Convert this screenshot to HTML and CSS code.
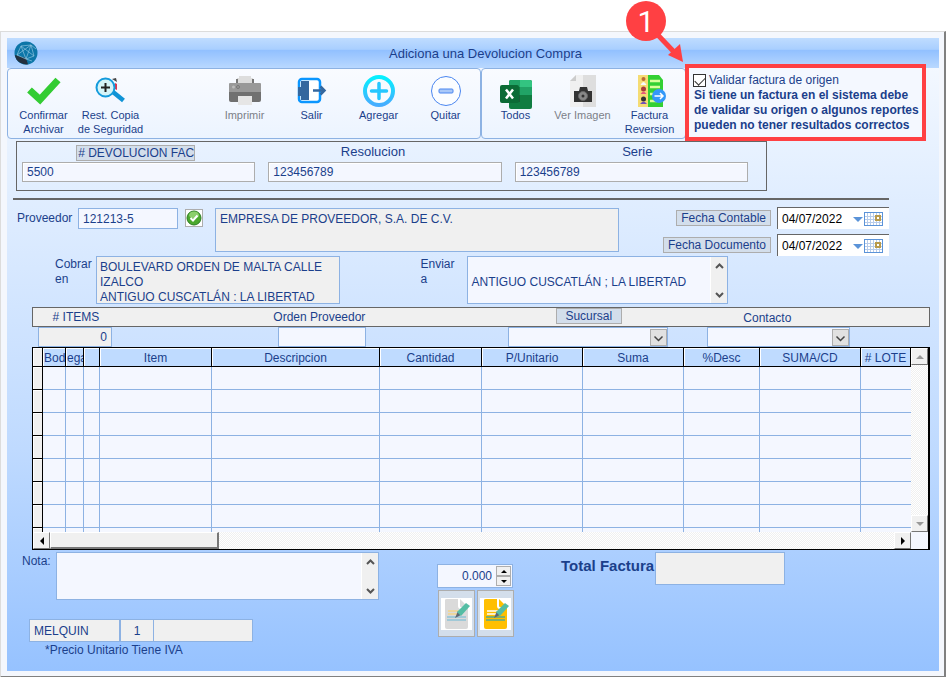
FILE: index.html
```html
<!DOCTYPE html>
<html lang="es">
<head>
<meta charset="UTF-8" />
<meta name="viewport" content="width=device-width, initial-scale=1" />
<title>Adiciona una Devolucion Compra</title>
<link rel="stylesheet" href="styles.css">
</head>
<body>

<div class="window">
  <header class="titlebar">
    <svg class="logo" viewBox="0 0 24 24">
      <circle cx="12" cy="12" r="11.5" fill="#0d76a8"/>
      <path d="M0.8 14 L12 17 L14 23.3 A11.5 11.5 0 0 1 0.8 14Z" fill="#22303f"/>
      <path d="M7 5 L17 4 L20 15 L12 18 L3 14Z M7 5 L20 15 M17 4 L3 14 M7 5 L12 18 M17 4 L12 18 M17 4 L22 8 M12 18 L18 20" fill="none" stroke="#8cc3de" stroke-width=".7"/>
    </svg>
    <h1>Adiciona una Devolucion Compra</h1>
  </header>

  <div class="toolbar">
    <div class="group group-main">
      <button class="tool">
        <svg viewBox="0 0 32 32"><path d="M1.500 15 L12 24.500 L30 5" fill="none" stroke="#33cc33" stroke-width="7"/></svg>
        <span>Confirmar Archivar</span>
      </button>
      <button class="tool">
        <svg viewBox="0 0 32 32">
          <path d="M17 4 l4 -1 l1 4z" fill="#444"/><path d="M20 8 l2 1 v6 l-2 -1z" fill="#e0344c"/>
          <path d="M18 17 L28.500 25.500" stroke="#0f93d6" stroke-width="4.500"/>
          <circle cx="10.500" cy="12.500" r="9" fill="#d5f4f8" stroke="#149bdc" stroke-width="2"/>
          <path d="M10.500 8 V17 M6 12.500 H15" stroke="#222" stroke-width="2"/>
        </svg>
        <span>Rest. Copia de Seguridad</span>
      </button>
      <button class="tool tool-off tool-apart" disabled>
        <svg viewBox="0 0 32 32">
          <path d="M8 9 V3 H10 V1 H22 V3 H24 V9Z" fill="#ddd"/>
          <path d="M7 4 H9 V8 H23 V4 H25 V10 H7Z" fill="#777"/>
          <rect y="8" width="32" height="10" rx="1" fill="#999"/>
          <path d="M0 17 H32 V25 Q32 27 30 27 H2 Q0 27 0 25Z" fill="#707070"/>
          <rect x="9" y="21" width="14" height="9" fill="#e6e6e6"/>
          <circle cx="4.500" cy="12" r="1.500" fill="#bbb"/><circle cx="9" cy="12" r="1.500" fill="#999" stroke="#777"/>
        </svg>
        <span>Imprimir</span>
      </button>
      <button class="tool">
        <svg viewBox="0 0 32 32">
          <rect x="3" y="4" width="21" height="23" rx="3" fill="#fff" stroke="#0a96ff" stroke-width="2.500"/>
          <path d="M5 6 H13 V25 H5 V21 H2 V12 H5Z" fill="#34679e"/>
          <path d="M17 15.500 H28 M24.500 11.500 L28.500 15.500 L24.500 19.500" fill="none" stroke="#34679e" stroke-width="2.500"/>
        </svg>
        <span>Salir</span>
      </button>
      <button class="tool">
        <svg viewBox="0 0 32 32">
          <defs><linearGradient id="ring" x2="0" y2="1"><stop stop-color="#06f0ff"/><stop offset="1" stop-color="#46acff"/></linearGradient></defs>
          <circle cx="16" cy="16" r="14" fill="#f8fbff" stroke="url(#ring)" stroke-width="4"/>
          <path d="M16 8.500 V23.500 M8.500 16 H23.500" stroke="#25c7ff" stroke-width="3.500" stroke-linecap="round"/>
        </svg>
        <span>Agregar</span>
      </button>
      <button class="tool">
        <svg viewBox="0 0 32 32">
          <circle cx="16" cy="16" r="14.500" fill="#fbfdff" stroke="#4a86f0"/>
          <rect x="9" y="14" width="14" height="4" rx="1" fill="#a9c8f8" stroke="#4a86f0"/>
        </svg>
        <span>Quitar</span>
      </button>
    </div>

    <div class="group group-extra">
      <button class="tool">
        <svg viewBox="0 0 32 32">
          <rect x="9" y="5" width="23" height="29" rx="2" fill="#107c41"/>
          <path d="M9 7 Q9 5 11 5 H20 V12 H9Z" fill="#21a366"/><path d="M20 5 H30 Q32 5 32 7 V12 H20Z" fill="#33c481"/>
          <path d="M20 12 H32 V20 H20Z" fill="#21a366"/><path d="M9 20 H20 V27 H9Z" fill="#185c37"/>
          <rect y="10" width="19" height="18" rx="2" fill="#0b6b36"/>
          <path d="M6 14.500 L13 23.500 M13 14.500 L6 23.500" stroke="#fff" stroke-width="2.500"/>
        </svg>
        <span>Todos</span>
      </button>
      <button class="tool tool-off" disabled>
        <svg viewBox="0 0 32 32">
          <path d="M9 0 H16 V32 H3 V6Z" fill="#f0f0f0"/><path d="M16 0 H29 V32 H16Z" fill="#dedede"/><path d="M9 0 V6 H3Z" fill="#ccc"/>
          <path d="M7 16 H12 L13 12 H20 L21 16 H25 V27 H7Z" fill="#333"/>
          <circle cx="16" cy="21" r="4.500" fill="#888" stroke="#666"/><circle cx="16" cy="21" r="1.500" fill="#333"/>
        </svg>
        <span>Ver Imagen</span>
      </button>
      <button class="tool">
        <svg viewBox="0 0 32 32">
          <path d="M4 0 H25 L29 5 V32 H4Z" fill="#33d033"/><rect x="4" width="10" height="32" fill="#f5dc74"/>
          <path d="M16 6 H26 M16 12 H26 M16 19 H22 M16 26 H23" stroke="#d9ff9a" stroke-width="2.500"/>
          <circle cx="9.500" cy="4" r="2" fill="#b96a35"/><path d="M6.500 10 Q9.500 4 12.500 10Z" fill="#f8fafc"/>
          <circle cx="9.500" cy="14" r="2.500" fill="#a63c3c"/><path d="M6.500 19 Q9.500 14 12.500 19Z" fill="#e65b7a"/>
          <circle cx="9.500" cy="24" r="2.500" fill="#333"/><path d="M6 29 Q9.500 24 13 29Z" fill="#7350b8"/>
          <circle cx="25" cy="21" r="7" fill="#3498f8"/>
          <path d="M20.500 21 H29 M26 18 L29 21 L26 24" fill="none" stroke="#fff" stroke-width="1.500"/>
        </svg>
        <span>Factura Reversion</span>
      </button>
    </div>

    <div class="validate">
      <label class="check"><input type="checkbox" checked> Validar factura de origen</label>
      <p>Si tiene un factura en el sistema debe<br>de validar su origen o algunos reportes<br>pueden no tener resultados correctos</p>
      <svg class="callout" viewBox="0 0 60 64">
        <circle cx="20" cy="21" r="20" fill="#ff4043"/>
        <path d="M30 33 L49 53" stroke="#ff4043" stroke-width="5"/>
        <path d="M57 62 L42 55 L54 44Z" fill="#ff4043"/>
        <text x="20" y="32" text-anchor="middle">1</text>
      </svg>
    </div>
  </div>

  <section class="document">
    <div class="field">
      <button class="link-btn link-clip"># DEVOLUCION FACT</button>
      <input class="box" type="text" value="5500" aria-label="Devolucion factura">
    </div>
    <div class="field">
      <label class="res-label" for="resolucion">Resolucion</label>
      <input class="box" id="resolucion" type="text" value="123456789">
    </div>
    <div class="field">
      <label class="serie-label" for="serie">Serie</label>
      <input class="box" id="serie" type="text" value="123456789">
    </div>
  </section>

  <hr>

  <section class="supplier">
    <label for="proveedor">Proveedor</label>
    <input class="code" id="proveedor" type="text" value="121213-5">
    <button class="accept" aria-label="Aceptar">
      <svg viewBox="0 0 16 16"><circle cx="8" cy="8" r="7" fill="#4ba82e" stroke="#2b7d22"/><ellipse cx="8" cy="5" rx="5" ry="3.500" fill="#8ccf6c"/><path d="M4.500 8 L7 10.500 L11.500 5.500" fill="none" stroke="#fff" stroke-width="2"/></svg>
    </button>
    <textarea class="company" readonly aria-label="Empresa">EMPRESA DE PROVEEDOR, S.A. DE C.V.</textarea>
    <div class="dates">
      <div class="date-row">
        <button class="link-btn">Fecha Contable</button>
        <div class="date">
          <input type="text" value="04/07/2022" aria-label="Fecha Contable">
          <button aria-label="Calendario"><svg viewBox="0 0 30 14"><path d="M0 5 H10 L5 10Z" fill="#5b93d8"/><rect x="11.500" y=".5" width="18" height="13" fill="#fff" stroke="#5b93d8"/><path d="M14.500 1 V13 M17.500 1 V13 M20.500 1 V13 M23.500 1 V13 M26.500 1 V13 M12 4.500 H29 M12 7.500 H29 M12 10.500 H29" stroke="#b8ccea"/><rect x="23" y="4" width="4" height="4" fill="#fff" stroke="#b89a4c" stroke-width="2"/></svg></button>
        </div>
      </div>
      <div class="date-row">
        <button class="link-btn">Fecha Documento</button>
        <div class="date">
          <input type="text" value="04/07/2022" aria-label="Fecha Documento">
          <button aria-label="Calendario"><svg viewBox="0 0 30 14"><path d="M0 5 H10 L5 10Z" fill="#5b93d8"/><rect x="11.500" y=".5" width="18" height="13" fill="#fff" stroke="#5b93d8"/><path d="M14.500 1 V13 M17.500 1 V13 M20.500 1 V13 M23.500 1 V13 M26.500 1 V13 M12 4.500 H29 M12 7.500 H29 M12 10.500 H29" stroke="#b8ccea"/><rect x="23" y="4" width="4" height="4" fill="#fff" stroke="#b89a4c" stroke-width="2"/></svg></button>
        </div>
      </div>
    </div>
  </section>

  <section class="addresses">
    <label for="cobrar">Cobrar en</label>
    <textarea class="bill-to" id="cobrar" readonly>BOULEVARD ORDEN DE MALTA CALLE
IZALCO
ANTIGUO CUSCATLÁN : LA LIBERTAD</textarea>
    <label class="ship-label" for="enviar">Enviar a</label>
    <div class="memo">
      <textarea id="enviar">

ANTIGUO CUSCATLÁN ; LA LIBERTAD</textarea>
      <div class="memo-scroll">
        <svg viewBox="0 0 9 6"><path d="M1 5 L4.500 1.500 L8 5" fill="none" stroke="#555" stroke-width="2"/></svg>
        <svg viewBox="0 0 9 6"><path d="M1 1 L4.500 4.500 L8 1" fill="none" stroke="#555" stroke-width="2"/></svg>
      </div>
    </div>
  </section>

  <section class="items">
    <div class="items-labels">
      <label for="nitems"># ITEMS</label>
      <label for="orden">Orden Proveedor</label>
      <button class="link-btn sucursal">Sucursal</button>
      <label class="contacto" for="contacto">Contacto</label>
    </div>
    <div class="items-fields">
      <input class="count" id="nitems" type="text" value="0" readonly>
      <input class="order" id="orden" type="text">
      <div class="combo combo-suc">
        <select aria-label="Sucursal"><option></option></select>
        <svg viewBox="0 0 17 17"><rect x=".5" y=".5" width="16" height="16" fill="#e1e1e1" stroke="#adadad"/><path d="M4.500 7.500 L8.500 11.500 L12.500 7.500" fill="none" stroke="#444" stroke-width="1.500"/></svg>
      </div>
      <div class="combo combo-con">
        <select id="contacto"><option></option></select>
        <svg viewBox="0 0 17 17"><rect x=".5" y=".5" width="16" height="16" fill="#e1e1e1" stroke="#adadad"/><path d="M4.500 7.500 L8.500 11.500 L12.500 7.500" fill="none" stroke="#444" stroke-width="1.500"/></svg>
      </div>
    </div>

    <div class="grid">
      <div class="grid-body">
        <table>
          <colgroup>
            <col class="c-mark"><col class="c-bod"><col class="c-ega"><col class="c-sel"><col class="c-item"><col class="c-desc">
            <col class="c-cant"><col class="c-num"><col class="c-num"><col class="c-pct"><col class="c-cd"><col class="c-lote">
          </colgroup>
          <thead>
            <tr><th class="mark"></th><th class="left">Bod</th><th class="left">ega</th><th></th><th>Item</th><th>Descripcion</th><th>Cantidad</th><th>P/Unitario</th><th>Suma</th><th>%Desc</th><th>SUMA/CD</th><th># LOTE</th></tr>
          </thead>
          <tbody>
            <tr><td class="mark"></td><td></td><td></td><td></td><td></td><td></td><td></td><td></td><td></td><td></td><td></td><td></td></tr>
            <tr><td class="mark"></td><td></td><td></td><td></td><td></td><td></td><td></td><td></td><td></td><td></td><td></td><td></td></tr>
            <tr><td class="mark"></td><td></td><td></td><td></td><td></td><td></td><td></td><td></td><td></td><td></td><td></td><td></td></tr>
            <tr><td class="mark"></td><td></td><td></td><td></td><td></td><td></td><td></td><td></td><td></td><td></td><td></td><td></td></tr>
            <tr><td class="mark"></td><td></td><td></td><td></td><td></td><td></td><td></td><td></td><td></td><td></td><td></td><td></td></tr>
            <tr><td class="mark"></td><td></td><td></td><td></td><td></td><td></td><td></td><td></td><td></td><td></td><td></td><td></td></tr>
            <tr><td class="mark"></td><td></td><td></td><td></td><td></td><td></td><td></td><td></td><td></td><td></td><td></td><td></td></tr>
            <tr class="cut"><td class="mark"></td><td></td><td></td><td></td><td></td><td></td><td></td><td></td><td></td><td></td><td></td><td></td></tr>
          </tbody>
        </table>
        <div class="hscroll">
          <button aria-label="Izquierda"><svg viewBox="0 0 8 8"><path d="M6 0 V8 L2 4Z"/></svg></button>
          <div class="thumb"></div>
          <button class="end" aria-label="Derecha"><svg viewBox="0 0 8 8"><path d="M2 0 V8 L6 4Z"/></svg></button>
        </div>
      </div>
      <div class="vscroll">
        <button aria-label="Subir" disabled><svg viewBox="0 0 8 8"><path d="M0 6 H8 L4 2Z"/></svg></button>
        <button class="end" aria-label="Bajar" disabled><svg viewBox="0 0 8 8"><path d="M0 2 H8 L4 6Z"/></svg></button>
      </div>
    </div>
  </section>

  <footer class="bottom">
    <div class="notes">
      <div class="note-row">
        <label for="nota">Nota:</label>
        <div class="memo note-memo">
          <textarea id="nota"></textarea>
          <div class="memo-scroll">
            <svg viewBox="0 0 9 6"><path d="M1 5 L4.500 1.500 L8 5" fill="none" stroke="#555" stroke-width="2"/></svg>
            <svg viewBox="0 0 9 6"><path d="M1 1 L4.500 4.500 L8 1" fill="none" stroke="#555" stroke-width="2"/></svg>
          </div>
        </div>
      </div>
      <div class="status">
        <input class="user" type="text" value="MELQUIN" readonly aria-label="Usuario">
        <input class="num" type="text" value="1" readonly aria-label="Numero">
        <input class="extra" type="text" readonly aria-label="Estado">
      </div>
      <p>*Precio Unitario Tiene IVA</p>
    </div>

    <div class="edit">
      <div class="spinner">
        <input type="text" value="0.000" aria-label="Valor">
        <div class="spin-btns">
          <button aria-label="Mas"><svg viewBox="0 0 6 3"><path d="M0 3 H6 L3 0Z"/></svg></button>
          <button aria-label="Menos"><svg viewBox="0 0 6 3"><path d="M0 0 H6 L3 3Z"/></svg></button>
        </div>
      </div>
      <div class="edit-btns">
        <button aria-label="Ver nota">
          <svg viewBox="0 0 31 32"><rect width="31" height="32" fill="#fff"/><path d="M4 2 Q4 1 6 1 H19 L27 9 V29 Q27 31 25 31 H6 Q4 31 4 29Z" fill="#dadada"/><path d="M18 1 V8 Q18 10 20 10 H26" fill="none" stroke="#fff" stroke-width="2"/><path d="M7 13 H18 M7 16 H17" stroke="#f4d58a" stroke-width="1.500"/><path d="M6 19 H25 M6 22 H25" stroke="#8fc3d6" stroke-width="1.500"/><path d="M14 20 L17 13 L20 17Z" fill="#5f6673"/><path d="M16 14 L25 5 L29 8 L20 18Z" fill="#55bda4"/></svg>
        </button>
        <button aria-label="Editar nota">
          <svg viewBox="0 0 31 32"><rect width="31" height="32" fill="#fff"/><path d="M4 2 Q4 1 6 1 H19 L27 9 V29 Q27 31 25 31 H6 Q4 31 4 29Z" fill="#ffbf00"/><path d="M18 1 V8 Q18 10 20 10 H26" fill="none" stroke="#fff" stroke-width="2"/><path d="M7 13 H18 M7 16 H17" stroke="#fff" stroke-width="1.500"/><path d="M6 19 H25 M6 22 H25" stroke="#57aa8a" stroke-width="1.500"/><path d="M14 20 L17 13 L20 17Z" fill="#5f6673"/><path d="M16 14 L25 5 L29 8 L20 18Z" fill="#55bda4"/></svg>
        </button>
      </div>
    </div>

    <div class="total">
      <label for="total">Total Factura</label>
      <input id="total" type="text" readonly>
    </div>
  </footer>
</div>

</body>
</html>
```
FILE: styles.css
```css
* { box-sizing: border-box; }
body {
  margin: 0; padding-top: 31px; background: #fff; color: #1b3f8b;
  font: 12px/15px "Liberation Sans", Arial, sans-serif;
}
button, input, textarea, select { font: inherit; color: inherit; margin: 0; border-radius: 0; }
input, textarea, select { border: 1px solid #8db2e3; background: #f4f7ff; padding: 0 4px; min-width: 0; }
input[readonly], textarea[readonly] { background: #f0f0f0; }
textarea { display: block; resize: none; overflow: hidden; }
button { padding: 0; }
p, h1 { margin: 0; }
svg { display: block; }

/* the form below the title shares one gradient */
.window {
  border: 1px solid #dcdcdc; border-right: 2px solid #808080; border-bottom: 2px solid #808080;
  padding: 6px 5px 5px 6px;
  background: linear-gradient(#f7faff, #e3efff 22%, #bfdaff 65%, #96c2ff) content-box, #f4f7fd;
}
.titlebar {
  display: flex; align-items: center; height: 30px; padding: 0 6px 0 7px;
  background: linear-gradient(#bfdcff, #a9cfff 38%, #91c0ff 40%, #b9d8ff);
}
.titlebar h1 { flex: 1; text-align: center; font-size: 13px; font-weight: normal; }
.logo { width: 24px; height: 24px; }

.toolbar { display: flex; align-items: flex-start; }
.group {
  display: flex; height: 71px; border: 1px solid #8db2e3; border-radius: 4px;
  background: linear-gradient(#f9fbff, #ecf4ff);
}
.group-main { width: 474px; padding-left: 2px; }
.group-extra { width: 205px; }
.tool {
  display: flex; flex-direction: column; align-items: center; width: 67px; flex: none;
  padding-top: 6px; border: 0; background: none; font-size: 11px; line-height: 14px;
}
.tool svg { width: 32px; height: 32px; margin-bottom: 1px; overflow: visible; }
.tool-off { color: #7c7f88; }
.tool-apart { margin-left: 67px; }

.validate {
  position: relative; width: 241px; height: 77px; margin: -4px 0 -2px -1px;
  border: 4px solid #ff4043; padding: 4px; background: #f4f8ff; white-space: nowrap;
}
.validate p { font-weight: bold; padding-left: 1px; }
.check { display: flex; align-items: center; gap: 3px; height: 16px; }
.check input { appearance: none; width: 13px; height: 13px; padding: 0; border: 1px solid #333; background: #fff; }
.check input:checked::before {
  content: ""; display: block; width: 9px; height: 5px; margin: 2px 1px;
  border: solid #333; border-width: 0 0 1px 1px; transform: rotate(-45deg);
}
.callout { position: absolute; left: -63px; top: -68px; width: 60px; height: 64px; }
.callout text { font: 30px Roboto, sans-serif; fill: #fff; }

.document {
  display: grid; grid-template-columns: 1fr 1fr 1fr; column-gap: 13px;
  margin: 2px 172px 0 9px; border: 1px solid #666; padding: 2px 18px 8px 5px;
}
.field { display: flex; flex-direction: column; align-items: center; }
.field label { height: 17px; }
.res-label { padding-right: 24px; }
.serie-label { padding-left: 12px; }
.field .box { width: 100%; height: 20px; border: 1px solid #adadad; box-shadow: inset 1px 1px #fff; margin-top: auto; }
.document label { font-size: 13px; }
.link-btn { height: 16px; border: 1px solid #adadad; background: #d3deeb; line-height: 14px; padding: 0 4px; white-space: nowrap; overflow: hidden; }
.link-clip { width: 119px; margin: 1px 6px 1px 0; padding: 0 1px; text-align: left; }

hr { height: 2px; border: 0; margin: 7px 50px 7px 6px; background: #666; }

.supplier { display: flex; align-items: flex-start; margin: 0 50px 0 10px; }
.supplier > label { width: 61px; padding-top: 4px; }
.code { width: 100px; height: 21px; margin-top: 1px; }
.accept { width: 18px; height: 18px; margin: 2px 12px 0 7px; border: 1px solid #adadad; background: #fff; }
.company { flex: 1; height: 44px; margin-top: 1px; padding-top: 3px; }
.dates { width: 227px; margin-left: 43px; display: grid; gap: 5px; }
.date-row { display: flex; align-items: center; justify-content: flex-end; gap: 6px; }
.date {
  display: flex; align-items: center; width: 112px; height: 22px; background: #fff;
  border: solid #666; border-width: 1px 0 0 1px;
}
.date input { flex: 1; border: 0; background: none; color: #000; padding-top: 2px; }
.date button { border: 0; background: none; margin-right: 6px; }
.date svg { width: 30px; height: 14px; }

.addresses { display: grid; grid-template-columns: 41px 244fr 127px 260fr; margin: 0 211px 0 48px; }
.addresses label { padding-top: 1px; }
.bill-to { height: 48px; padding-top: 3px; padding-left: 3px; }
.addresses .ship-label { padding-left: 80px; padding-right: 8px; }
.memo { display: flex; height: 48px; border: 1px solid #8db2e3; background: #f4f7ff; }
.memo textarea { flex: 1; border: 0; background: none; padding-top: 3px; padding-left: 3px; }
.memo-scroll {
  display: flex; flex-direction: column; justify-content: space-between; align-items: center;
  width: 17px; padding: 6px 0 5px; border-left: 1px solid #fff; background: #f0f0f0;
}
.memo-scroll svg { width: 9px; height: 6px; }

.items { margin: 3px 9px 0 25px; }
.items-labels {
  display: grid; grid-template-columns: 86fr 402fr 138fr 220fr 52fr; justify-items: center;
  height: 20px; border: 1px solid #666; background: #f0f0f0; line-height: 18px;
}
.sucursal { width: 66px; }
.contacto { padding-top: 1px; }
.items-fields { display: grid; grid-template-columns: 74fr 166fr 88fr 142fr 160fr 39fr 143fr 80fr; padding-left: 6px; }
.items-fields > * { height: 20px; width: 100%; }
.count { text-align: right; }
.order { grid-column: 3; }
.combo-suc { grid-column: 5; }
.combo-con { grid-column: 7; }
.combo { position: relative; }
.combo select { appearance: none; width: 100%; height: 20px; }
.combo svg { position: absolute; right: 1px; top: 2px; width: 17px; height: 17px; pointer-events: none; }

.grid { display: flex; border: 1px solid #000; border-width: 1px 2px 1px 1px; background: #f4f7ff; }
.grid-body { flex: 1; min-width: 0; }
table { width: 100%; table-layout: fixed; border-spacing: 0; }
th, td { padding: 0; height: 23px; border: solid #8db2e3; border-width: 0 1px 1px 0; overflow: hidden; }
th { height: 19px; border-color: #000; background: #bfdbff; box-shadow: inset 1px 1px #fff; font-weight: normal; line-height: 16px; padding-top: 2px; white-space: nowrap; }
td:last-child { border-right: 0; }
.left { text-align: left; padding-left: 1px; }
.mark { border-color: #000; background: #f0f0f0; box-shadow: inset 1px 1px #fff; }
.cut td { height: 4px; border-bottom: 0; }
.c-mark { width: 10px; }
.c-bod { width: 23px; }
.c-ega { width: 18px; }
.c-sel { width: 16px; }
.c-item { width: 112px; }
.c-desc { width: 168px; }
.c-cant { width: 102px; }
.c-num { width: 101px; }
.c-pct { width: 76px; }
.c-cd { width: 101px; }
.c-lote { width: 50px; }
.hscroll, .vscroll { display: flex; background: repeating-conic-gradient(#fff 0 25%, #f0f0f0 0 50%) 0 0 / 2px 2px; }
.hscroll { height: 17px; }
.vscroll { flex-direction: column; width: 17px; margin-bottom: 17px; }
.hscroll button, .vscroll button {
  display: grid; place-items: center; width: 17px; height: 17px; background: #f0f0f0;
  border: 1px solid #fff; border-right-color: #777; border-bottom-color: #777;
}
.hscroll svg, .vscroll svg { width: 8px; height: 8px; }
.vscroll svg { fill: #999; }
.thumb { width: 169px; background: #f0f0f0; border: 1px solid #fff; border-right: 2px solid #777; border-bottom: 2px solid #777; }
.end { margin: auto 0 0 auto; }

.bottom { display: flex; align-items: flex-start; padding: 2px 10px 13px 15px; }
.notes { width: 357px; }
.note-row { display: flex; }
.note-row label { width: 34px; padding-top: 2px; }
.note-memo { flex: 1; }
.status { display: flex; margin: 19px 0 0 7px; }
.status input { height: 23px; }
.user { width: 91px; }
.status .num { width: 34px; text-align: center; }
.status .extra { width: 100px; margin-left: -1px; }
.notes p { padding: 1px 0 0 23px; }

.edit { width: 76px; margin: 12px 48px 0 58px; }
.spinner { display: flex; align-items: center; height: 24px; border: 1px solid #8db2e3; background: #f4f7ff; padding-right: 1px; }
.spinner input { flex: 1; border: 0; background: none; text-align: right; }
.spin-btns button { display: grid; place-items: center; width: 15px; height: 10px; border: 1px solid #adadad; background: #f0f0f0; }
.spin-btns svg { width: 6px; height: 3px; }
.edit-btns { display: flex; gap: 2px; margin: 2px 0 0 1px; }
.edit-btns button { width: 37px; height: 47px; border: 1px solid #adadad; background: #d3deeb; padding: 0 2px; }
.edit-btns svg { width: 31px; height: 32px; }

.total { display: flex; font-size: 15px; font-weight: bold; }
.total label { width: 94px; padding-top: 6px; }
.total input { width: 130px; height: 33px; }
```
